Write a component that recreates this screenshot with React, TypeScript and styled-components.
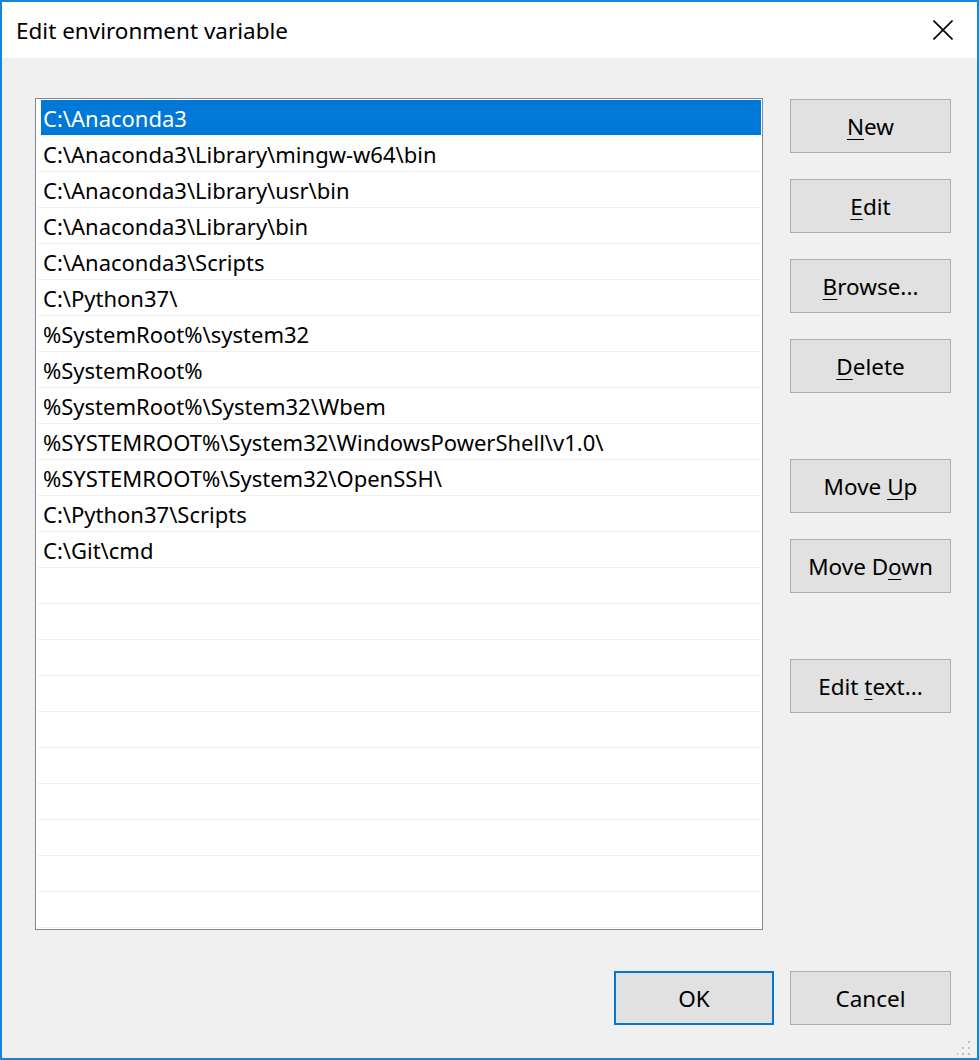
import React from "react";
import styled, { createGlobalStyle } from "styled-components";

const Global = createGlobalStyle`
  html, body { margin: 0; padding: 0; background: #f0f0f0; }
  * { box-sizing: border-box; }
`;

const FONT = `"Noto Sans", "Open Sans", "Liberation Sans", sans-serif`;

const Window = styled.div`
  position: relative;
  width: 979px;
  height: 1060px;
  border: 2px solid #1883d7;
  background: #f0f0f0;
  display: flex;
  flex-direction: column;
  font-family: ${FONT};
  color: #000;
`;

const TitleBar = styled.div`
  height: 56px;
  background: #fff;
  display: flex;
  align-items: center;
  justify-content: space-between;
  padding: 0 24px 0 14px;
`;

const Title = styled.div`
  font-size: 22.5px;
`;

const CloseBtn = styled.div`
  width: 20px;
  height: 20px;
  display: flex;
`;

const Body = styled.div`
  flex: 1;
  display: flex;
  flex-direction: column;
  padding: 40px 26px 0 33px;
`;

const Main = styled.div`
  display: flex;
  gap: 27px;
`;

const List = styled.div`
  width: 728px;
  height: 832px;
  border: 1px solid #828790;
  background: #fff;
  padding: 1px 1px 0 2px;
  overflow: hidden;
`;

const Row = styled.div<{ $selected?: boolean }>`
  height: 36px;
  border-bottom: 1px solid #f0f0f0;
  padding: 2px 0 0 5px;
  font-size: 22px;
  line-height: 33px;
  white-space: nowrap;
  color: ${(p) => (p.$selected ? "#fff" : "#000")};
  background: ${(p) =>
    p.$selected ? "linear-gradient(to right, transparent 3px, #0078d7 3px)" : "transparent"};
  border-bottom-color: ${(p) => (p.$selected ? "#fff" : "#f0f0f0")};
`;

const Buttons = styled.div`
  width: 161px;
  margin-top: 1px;
  display: flex;
  flex-direction: column;
`;

const Button = styled.div<{ $gap?: number; $default?: boolean; $width?: number }>`
  width: ${(p) => p.$width ?? 161}px;
  height: 54px;
  margin-top: ${(p) => p.$gap ?? 0}px;
  background: #e1e1e1;
  border: ${(p) => (p.$default ? "2px solid #0078d7" : "1px solid #adadad")};
  display: flex;
  align-items: center;
  justify-content: center;
  font-size: 22.5px;
  padding-top: 1px;
  u {
    text-decoration-thickness: 1px;
    text-underline-offset: 4px;
  }
`;

const Footer = styled.div`
  margin-top: 41px;
  display: flex;
  justify-content: flex-end;
  gap: 16px;
`;

const Grip = styled.svg`
  position: absolute;
  right: 6px;
  bottom: 3px;
`;

const items = [
  "C:\\Anaconda3",
  "C:\\Anaconda3\\Library\\mingw-w64\\bin",
  "C:\\Anaconda3\\Library\\usr\\bin",
  "C:\\Anaconda3\\Library\\bin",
  "C:\\Anaconda3\\Scripts",
  "C:\\Python37\\",
  "%SystemRoot%\\system32",
  "%SystemRoot%",
  "%SystemRoot%\\System32\\Wbem",
  "%SYSTEMROOT%\\System32\\WindowsPowerShell\\v1.0\\",
  "%SYSTEMROOT%\\System32\\OpenSSH\\",
  "C:\\Python37\\Scripts",
  "C:\\Git\\cmd",
];

export default function App() {
  const rows = [...items, ...Array(23 - items.length).fill("")];
  return (
    <>
      <Global />
      <Window>
        <TitleBar>
          <Title>Edit environment variable</Title>
          <CloseBtn>
            <svg width="20" height="20" viewBox="0 0 20 20">
              <path d="M0.5 0.5 L19.5 19.5 M19.5 0.5 L0.5 19.5" stroke="#000" strokeWidth="1.6" fill="none" />
            </svg>
          </CloseBtn>
        </TitleBar>
        <Body>
          <Main>
            <List>
              {rows.map((r, i) => (
                <Row key={i} $selected={i === 0}>
                  {r}
                </Row>
              ))}
            </List>
            <Buttons>
              <Button>
                <span><u>N</u>ew</span>
              </Button>
              <Button $gap={26}>
                <span><u>E</u>dit</span>
              </Button>
              <Button $gap={26}>
                <span><u>B</u>rowse...</span>
              </Button>
              <Button $gap={26}>
                <span><u>D</u>elete</span>
              </Button>
              <Button $gap={66}>
                <span>Move <u>U</u>p</span>
              </Button>
              <Button $gap={26}>
                <span>Move D<u>o</u>wn</span>
              </Button>
              <Button $gap={66}>
                <span>Edit <u>t</u>ext...</span>
              </Button>
            </Buttons>
          </Main>
          <Footer>
            <Button $default $width={160}>OK</Button>
            <Button>Cancel</Button>
          </Footer>
        </Body>
        <Grip width="14" height="14" viewBox="0 0 14 14">
          <g fill="#bdbdbd">
            <rect x="11" y="0" width="2" height="2" />
            <rect x="5" y="6" width="2" height="2" />
            <rect x="11" y="6" width="2" height="2" />
            <rect x="-1" y="12" width="2" height="2" />
            <rect x="5" y="12" width="2" height="2" />
            <rect x="11" y="12" width="2" height="2" />
          </g>
        </Grip>
      </Window>
    </>
  );
}
